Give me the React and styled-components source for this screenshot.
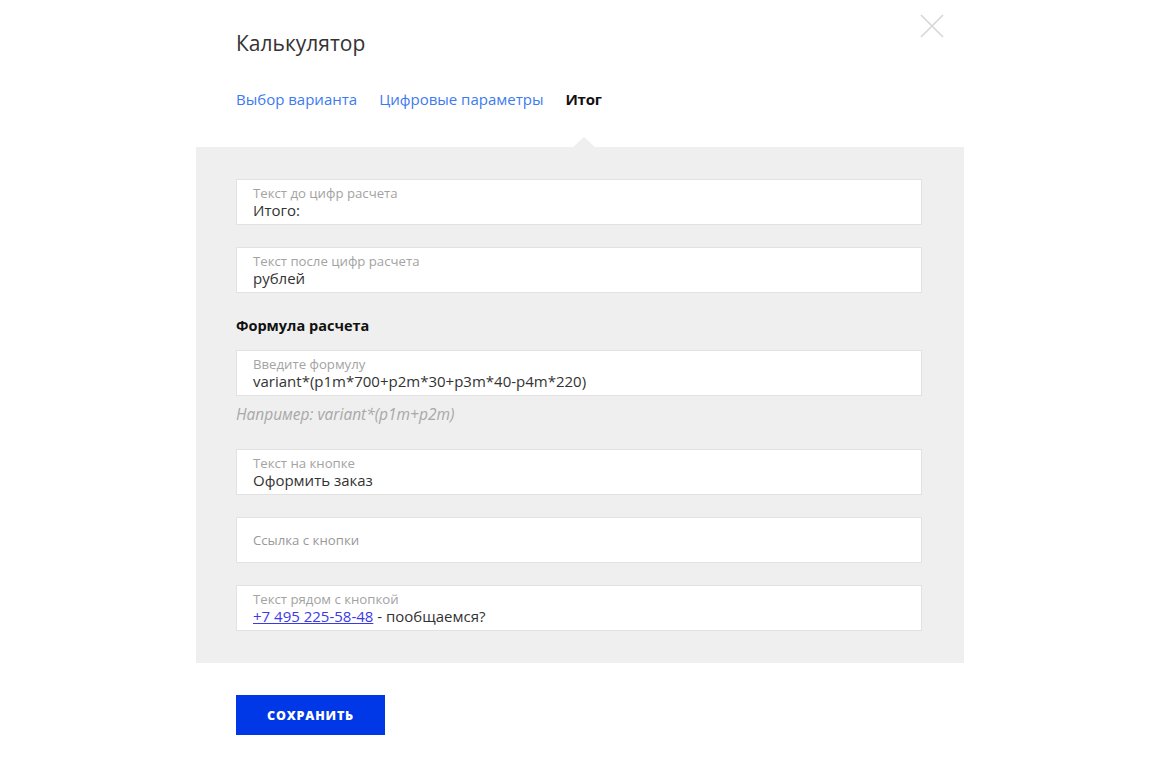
import React from "react";
import styled, { createGlobalStyle } from "styled-components";

const Global = createGlobalStyle`
  body {
    margin: 0;
    background: #fff;
    font-family: "Open Sans", "Liberation Sans", sans-serif;
    color: #333;
  }
`;

const Modal = styled.div`
  position: relative;
  width: 768px;
  margin: 0 auto 0 196px;
  padding-top: 29px;
`;

const Close = styled.button`
  position: absolute;
  top: 14px;
  right: 20px;
  width: 24px;
  height: 24px;
  padding: 0;
  border: none;
  background: none;
  cursor: pointer;
`;

const Title = styled.h2`
  margin: 0 0 0 40px;
  font-size: 21px;
  font-weight: 400;
  line-height: 28px;
  color: #333;
`;

const Tabs = styled.nav`
  display: flex;
  align-items: flex-start;
  gap: 22px;
  margin: 32px 0 0 40px;
  height: 58px;
`;

const Tab = styled.a`
  position: relative;
  font-size: 15px;
  line-height: 20px;
  text-decoration: none;
  color: ${(p) => (p.$active ? "#111" : "#3b7bf0")};
  font-weight: ${(p) => (p.$active ? 700 : 400)};
  letter-spacing: ${(p) => (p.$active ? "-0.2px" : "0")};
  cursor: pointer;

  ${(p) =>
    p.$active &&
    `
    &::after {
      content: "";
      position: absolute;
      left: 50%;
      bottom: -38px;
      margin-left: -11px;
      border: 11px solid transparent;
      border-top: none;
      border-bottom: 10px solid #efefef;
    }
  `}
`;

const Panel = styled.div`
  background: #efefef;
  padding: 32px 42px 32px 40px;
  display: flex;
  flex-direction: column;
`;

const Field = styled.label`
  display: flex;
  flex-direction: column;
  justify-content: center;
  height: 46px;
  box-sizing: border-box;
  padding: 0 16px;
  background: #fff;
  border: 1px solid #e2e2e2;
  margin-bottom: ${(p) => p.$mb ?? 22}px;
`;

const Label = styled.span`
  font-size: 13.2px;
  line-height: 15px;
  color: ${(p) => (p.$placeholder ? "#999" : "#a3a3a3")};
  margin-top: ${(p) => (p.$placeholder ? 0 : 1)}px;
`;

const Value = styled.span`
  font-size: 15px;
  line-height: 19px;
  color: #333;

  a {
    color: #3a3ae6;
    text-decoration: underline;
  }
`;

const Heading = styled.h3`
  margin: 0 0 14px;
  font-size: 14.5px;
  font-weight: 700;
  color: #111;
  line-height: 20px;
`;

const Hint = styled.p`
  margin: 8px 0 25px;
  font-size: 15.5px;
  font-style: italic;
  color: #a8a8a8;
  line-height: 20px;
`;

const Footer = styled.div`
  padding: 32px 40px;
`;

const SaveButton = styled.button`
  width: 149px;
  height: 40px;
  border: none;
  background: #0038e8;
  color: #fff;
  font-family: inherit;
  font-size: 12.5px;
  font-weight: 800;
  letter-spacing: 0.8px;
  cursor: pointer;
`;

export default function App() {
  return (
    <>
      <Global />
      <Modal>
        <Close aria-label="Закрыть">
          <svg width="24" height="24" viewBox="0 0 24 24">
            <path d="M1 1 L23 23 M23 1 L1 23" stroke="#d6d6d6" strokeWidth="1.6" />
          </svg>
        </Close>
        <Title>Калькулятор</Title>
        <Tabs>
          <Tab>Выбор варианта</Tab>
          <Tab>Цифровые параметры</Tab>
          <Tab $active>Итог</Tab>
        </Tabs>
        <Panel>
          <Field>
            <Label>Текст до цифр расчета</Label>
            <Value>Итого:</Value>
          </Field>
          <Field $mb={23}>
            <Label>Текст после цифр расчета</Label>
            <Value>рублей</Value>
          </Field>
          <Heading>Формула расчета</Heading>
          <Field $mb={0}>
            <Label>Введите формулу</Label>
            <Value>variant*(p1m*700+p2m*30+p3m*40-p4m*220)</Value>
          </Field>
          <Hint>Например: variant*(p1m+p2m)</Hint>
          <Field>
            <Label>Текст на кнопке</Label>
            <Value>Оформить заказ</Value>
          </Field>
          <Field>
            <Label $placeholder>Ссылка с кнопки</Label>
          </Field>
          <Field $mb={0}>
            <Label>Текст рядом с кнопкой</Label>
            <Value>
              <a href="#">+7 495 225-58-48</a> - пообщаемся?
            </Value>
          </Field>
        </Panel>
        <Footer>
          <SaveButton>СОХРАНИТЬ</SaveButton>
        </Footer>
      </Modal>
    </>
  );
}
